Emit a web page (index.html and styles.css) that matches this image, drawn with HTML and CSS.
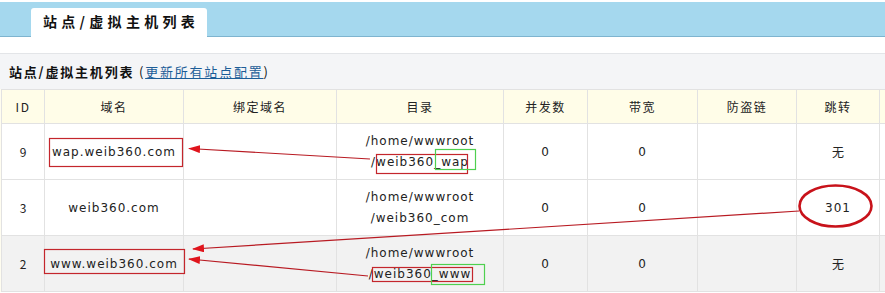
FILE: index.html
```html
<!DOCTYPE html>
<html lang="zh-CN">
<head>
  <meta charset="UTF-8" />
  <title>站点/虚拟主机列表</title>
  <link rel="stylesheet" href="styles.css">
</head>
<body>
  <div class="page">
    <div class="tab-bar">
      <div class="tab">站点/虚拟主机列表</div>
    </div>

    <div class="panel">
      <div class="panel-title">
        <b>站点/虚拟主机列表</b> (<a href="#">更新所有站点配置</a>)
      </div>

      <table class="site-table">
        <thead>
          <tr>
            <th class="c-id">ID</th>
            <th class="c-domain">域名</th>
            <th class="c-bind">绑定域名</th>
            <th class="c-dir">目录</th>
            <th class="c-conn">并发数</th>
            <th class="c-bw">带宽</th>
            <th class="c-leech">防盗链</th>
            <th class="c-jump">跳转</th>
            <th class="c-more"></th>
          </tr>
        </thead>
        <tbody>
          <tr>
            <td>9</td>
            <td class="mono">wap.weib360.com</td>
            <td></td>
            <td class="mono dir">/home/wwwroot<br>/weib360_wap</td>
            <td class="mono">0</td>
            <td class="mono">0</td>
            <td></td>
            <td>无</td>
            <td></td>
          </tr>
          <tr>
            <td>3</td>
            <td class="mono">weib360.com</td>
            <td></td>
            <td class="mono dir">/home/wwwroot<br>/weib360_com</td>
            <td class="mono">0</td>
            <td class="mono">0</td>
            <td></td>
            <td class="mono">301</td>
            <td></td>
          </tr>
          <tr class="alt">
            <td>2</td>
            <td class="mono">www.weib360.com</td>
            <td></td>
            <td class="mono dir">/home/wwwroot<br>/weib360_www</td>
            <td class="mono">0</td>
            <td class="mono">0</td>
            <td></td>
            <td>无</td>
            <td></td>
          </tr>
        </tbody>
      </table>
    </div>

    <!-- hand-drawn annotations on top of the screenshot -->
    <svg class="marks" width="885" height="293" viewBox="0 0 885 293">
      <defs>
        <marker id="head" markerWidth="12" markerHeight="8" refX="11" refY="4" orient="auto" markerUnits="userSpaceOnUse">
          <path d="M0 0 L12 4 L0 8 Z" fill="#e0141c" />
        </marker>
      </defs>
      <g fill="none" stroke-width="1.2">
        <rect x="49.5" y="138.5" width="133" height="28" stroke="#c4262c" />
        <rect x="376.5" y="154.5" width="91" height="19" stroke="#c4262c" />
        <rect x="435.5" y="149.5" width="40" height="20" stroke="#4fd04f" />

        <rect x="44.5" y="249.5" width="140" height="24" stroke="#c4262c" />
        <rect x="372.5" y="267.5" width="100" height="14" stroke="#c4262c" />
        <rect x="431.5" y="264.5" width="53" height="20" stroke="#4fd04f" />

        <line x1="370" y1="159" x2="189" y2="148.5" stroke="#b81a22" marker-end="url(#head)" />
        <line x1="799" y1="211" x2="193" y2="249" stroke="#b81a22" marker-end="url(#head)" />
        <line x1="368" y1="276" x2="189" y2="259" stroke="#b81a22" marker-end="url(#head)" />

        <ellipse cx="835.5" cy="206" rx="36" ry="20.5" stroke="#c8121a" stroke-width="2.6" />
      </g>
    </svg>
  </div>
</body>
</html>
```

FILE: styles.css
```css
* {
  margin: 0;
  padding: 0;
  box-sizing: border-box;
}

body {
  width: 885px;
  height: 293px;
  overflow: hidden;
  background: #fff;
  font-family: "Noto Sans CJK SC", "DejaVu Sans", sans-serif;
  font-size: 12px;
  color: #222;
}

.page {
  position: relative;
  padding-top: 2px;
}

.tab-bar {
  height: 35px;
  background: #a5d8ee;
  border-bottom: 1px solid #7eb4cf;
  padding: 7px 0 0 31px;
  display: flex;
  align-items: flex-end;
}

.tab {
  width: 176px;
  height: 29px;
  margin-bottom: -1px;
  background: #fff;
  border-radius: 3px 3px 0 0;
  padding-left: 12px;
  font-size: 14px;
  font-weight: bold;
  letter-spacing: 4.3px;
  line-height: 27px;
  color: #111;
}

.panel {
  margin-top: 16px;
  background: #fffdf0;
}

.panel-title {
  height: 36px;
  line-height: 36px;
  padding-left: 9px;
  background: #f4f5f7;
  border-top: 1px solid #e3e5e8;
  font-size: 13px;
  letter-spacing: 1.8px;
  color: #111;
}

.panel-title a {
  color: #1c5d97;
  text-decoration: underline;
}

.site-table {
  width: 940px;
  margin-left: 1px;
  border-collapse: collapse;
  table-layout: fixed;
  background: #fff;
}

.site-table th,
.site-table td {
  border: 1px solid #e2e2e2;
  text-align: center;
  vertical-align: middle;
  font-weight: normal;
}

.site-table th {
  height: 34px;
  background: #fffde8;
  color: #222;
  letter-spacing: 1.5px;
}

.site-table td {
  height: 56px;
}

.site-table tr.alt td {
  background: #f2f2f2;
}

.c-id { width: 43px; }
.c-domain { width: 139px; }
.c-bind { width: 153px; }
.c-dir { width: 167px; }
.c-conn { width: 84px; }
.c-bw { width: 110px; }
.c-leech { width: 99px; }
.c-jump { width: 83px; }

.mono {
  font-family: "DejaVu Sans", sans-serif;
  letter-spacing: 1px;
  color: #222;
}

.dir {
  line-height: 21px;
}

.marks {
  position: absolute;
  left: 0;
  top: 0;
}
```
